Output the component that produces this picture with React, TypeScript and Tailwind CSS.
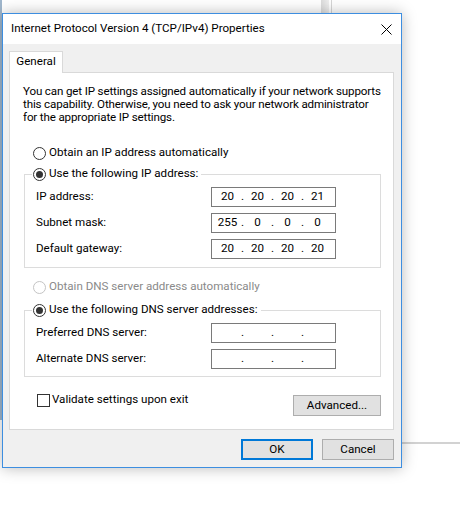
import React from "react";

const font = "font-['Roboto','Noto_Sans',sans-serif]";

function Radio({ checked, disabled }: { checked?: boolean; disabled?: boolean }) {
  return (
    <span
      className={`flex h-[13px] w-[13px] shrink-0 items-center justify-center rounded-full border bg-white ${
        disabled ? "border-[#c4c4c4]" : "border-[#333333]"
      }`}
    >
      {checked && <span className="h-[7px] w-[7px] rounded-full bg-[#333333]" />}
    </span>
  );
}

function IpField({ parts }: { parts: string[] }) {
  return (
    <div className="flex h-[20px] w-[125px] items-center border border-[#7a7a7a] bg-white pl-[3px] text-black">
      {parts.map((p, i) => (
        <React.Fragment key={i}>
          <span className="w-[25px] text-center">{p}</span>
          {i < 3 && <span className="w-[5px] text-center">.</span>}
        </React.Fragment>
      ))}
    </div>
  );
}

function FieldRow({ label, parts }: { label: string; parts: string[] }) {
  return (
    <div className="flex h-[20px] items-center">
      <span className="w-[175px]">{label}</span>
      <IpField parts={parts} />
    </div>
  );
}

export default function App() {
  return (
    <div className={`relative h-[511px] w-[460px] overflow-hidden whitespace-nowrap bg-white text-[11.6px] text-black ${font}`}>
      {/* background windows */}
      <div className="absolute left-[-10px] top-[-20px] h-[462px] w-[342px] border-r border-[#d6d6d6] bg-white">
        <div className="absolute right-[2px] top-0 h-[33px] w-[8px] bg-gradient-to-r from-[#dcdcdc] to-[#efefef]" />
        <div className="absolute left-[10px] top-[20px] h-[420px] w-[2px] bg-[#9fb6cc]" />
      </div>
      <div className="absolute left-[332px] top-[-10px] h-[454px] w-[200px] border-b-2 border-[#d2d2d2] bg-white" />

      {/* dialog */}
      <div className="absolute left-[2px] top-[13px] flex h-[455px] w-[400px] flex-col border border-[#3d8ee0] bg-[#f0f0f0] shadow-[0_0_14px_rgba(0,0,0,0.28)]">
        <div className="flex h-[30px] shrink-0 items-center justify-between bg-white pl-[8px] pr-[9px]">
          <span>Internet Protocol Version 4 (TCP/IPv4) Properties</span>
          <svg width="11" height="11" viewBox="0 0 11 11" className="mt-[1px]">
            <path d="M0.5 0.5 L10.5 10.5 M10.5 0.5 L0.5 10.5" stroke="#000" strokeWidth="1" />
          </svg>
        </div>

        <div className="flex min-h-0 flex-1 flex-col px-[6px] pb-[7px] pt-[7px]">
          <div className="flex">
            <div className="relative z-10 -mb-px flex h-[22px] w-[54px] items-center justify-center border border-b-0 border-[#d9d9d9] bg-white pb-[1px]">
              General
            </div>
          </div>
          <div className="mr-[1px] flex min-h-0 flex-1 flex-col border border-[#d9d9d9] bg-white pl-[13px] pr-[12px] pt-[12px]">
            <p className="leading-[13px] tracking-[-0.15px]">
              You can get IP settings assigned automatically if your network supports
              <br />
              this capability. Otherwise, you need to ask your network administrator
              <br />
              for the appropriate IP settings.
            </p>

            <div className="mt-[21px] flex h-[16px] items-center gap-[3px] pl-[10px]">
              <Radio />
              <span>Obtain an IP address automatically</span>
            </div>

            <fieldset className="ml-[1px] mt-[5px] border border-[#dcdcdc] pb-[8px] pl-[11px]">
              <legend className="-ml-[4px] flex h-[16px] items-center gap-[3px] pl-[1px] pr-[3px]">
                <Radio checked />
                <span>Use the following IP address:</span>
              </legend>
              <div className="mt-[5px] flex flex-col gap-[6px]">
                <FieldRow label="IP address:" parts={["20", "20", "20", "21"]} />
                <FieldRow label="Subnet mask:" parts={["255", "0", "0", "0"]} />
                <FieldRow label="Default gateway:" parts={["20", "20", "20", "20"]} />
              </div>
            </fieldset>

            <div className="mt-[11px] flex h-[16px] items-center gap-[3px] pl-[10px] text-[#8a8a8a]">
              <Radio disabled />
              <span>Obtain DNS server address automatically</span>
            </div>

            <fieldset className="ml-[1px] mt-[7px] border border-[#dcdcdc] pb-[7px] pl-[11px]">
              <legend className="-ml-[4px] flex h-[16px] items-center gap-[3px] pl-[1px] pr-[3px]">
                <Radio checked />
                <span>Use the following DNS server addresses:</span>
              </legend>
              <div className="mt-[5px] flex flex-col gap-[6px]">
                <FieldRow label="Preferred DNS server:" parts={["", "", "", ""]} />
                <FieldRow label="Alternate DNS server:" parts={["", "", "", ""]} />
              </div>
            </fieldset>

            <div className="mt-[15px] flex items-start justify-between">
              <div className="ml-[14px] flex h-[16px] items-center gap-[2px]">
                <span className="h-[13px] w-[13px] border border-[#333333] bg-white" />
                <span>Validate settings upon exit</span>
              </div>
              <button className="mt-[3px] flex h-[21px] w-[88px] items-center justify-center border border-[#adadad] bg-[#e1e1e1]">
                Advanced...
              </button>
            </div>
          </div>

          <div className="mt-[9px] flex shrink-0 justify-end gap-[9px] pr-[1px]">
            <button className="flex h-[21px] w-[72px] items-center justify-center border-2 border-[#0078d7] bg-[#e1e1e1]">
              OK
            </button>
            <button className="flex h-[21px] w-[72px] items-center justify-center border border-[#adadad] bg-[#e1e1e1]">
              Cancel
            </button>
          </div>
        </div>
      </div>
    </div>
  );
}
